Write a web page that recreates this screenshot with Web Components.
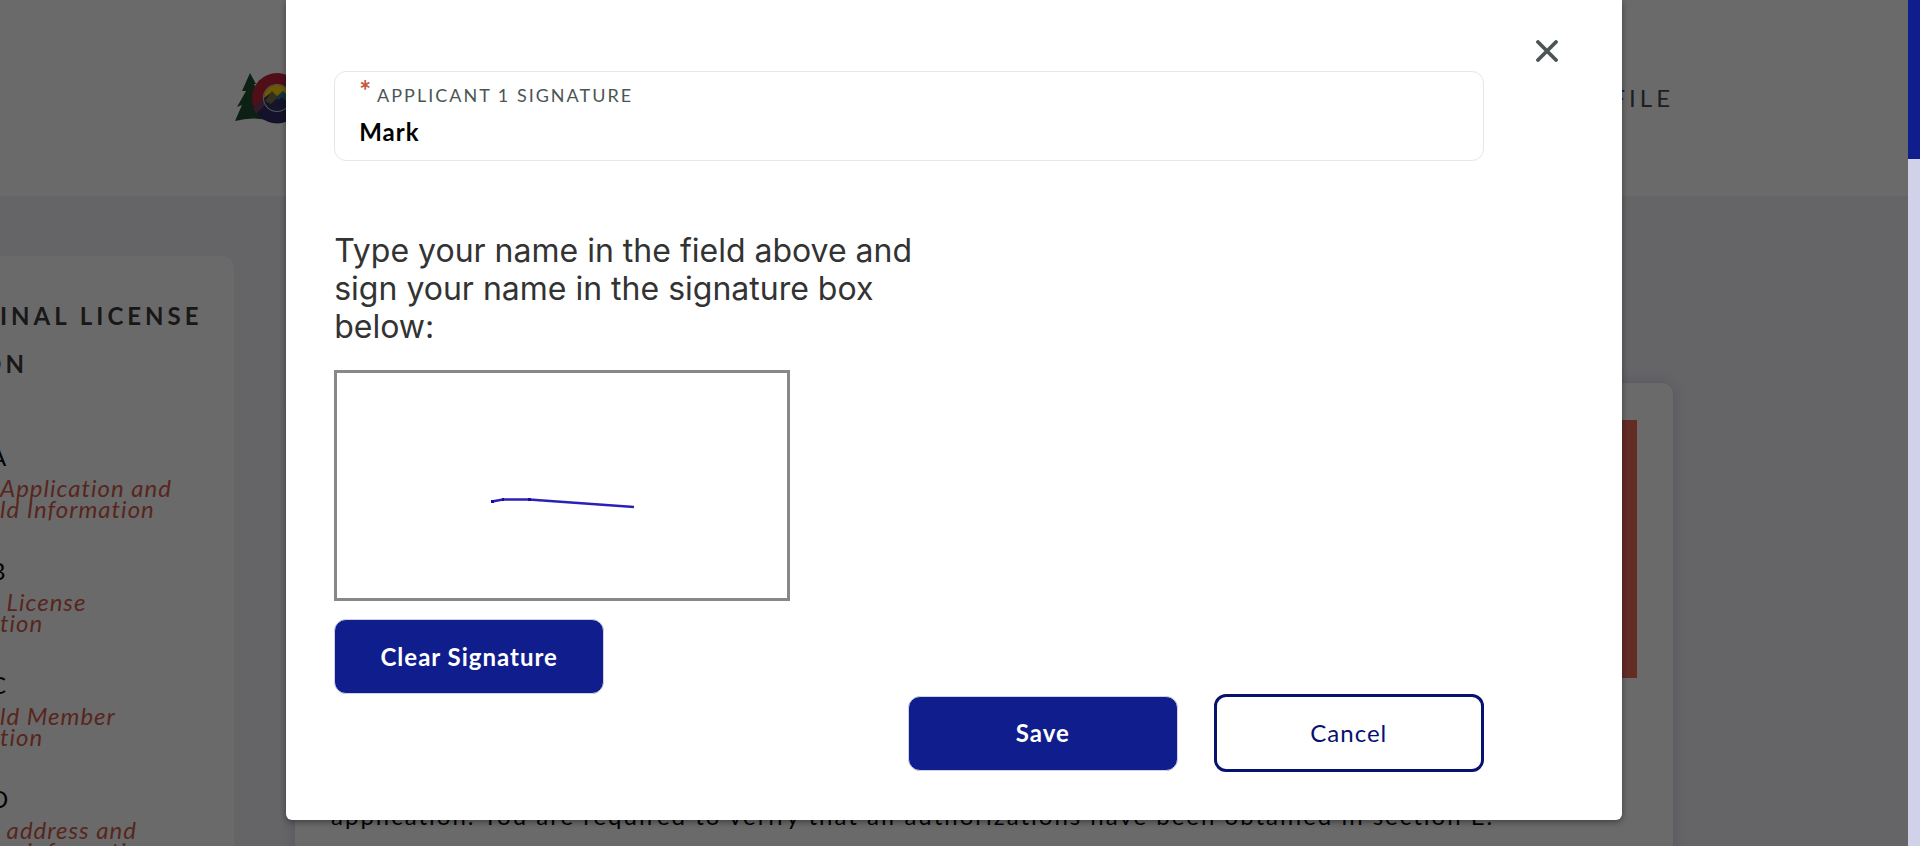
<!DOCTYPE html>
<html lang="en">
<head>
<meta charset="utf-8">
<title>Applicant signature</title>
<style>
  html, body { margin: 0; height: 100%; }
  body { font-family: Lato, "Open Sans", sans-serif; font-size: 24px; color: #000; overflow: hidden; }
</style>
</head>
<body>
<license-app></license-app>

<script>
const define = (name, html, setup) => {
  const template = document.createElement('template');
  template.innerHTML = html;
  customElements.define(name, class extends HTMLElement {
    constructor() {
      super();
      this.attachShadow({ mode: 'open' }).append(template.content.cloneNode(true));
    }
    connectedCallback() { if (setup) setup(this, this.shadowRoot); }
  });
};

define('site-header', `
  <style>
    :host { display: flex; align-items: center; justify-content: space-between; box-sizing: border-box;
      height: 196px; padding: 0 234px; background: #fff; }
    svg { display: block; width: 70px; height: 54px; }
    a { color: #3c4548; text-decoration: none; letter-spacing: 4px; line-height: 32px; }
  </style>
  <svg viewBox="0 0 70 54" role="img" aria-label="Colorado">
    <path d="M16 2 22 13 20 13 26 24 23 24 30 36 27 36 36 50Q20 45 1 50L8 34 3 36 12 20 8 20Z" fill="#124a28"/>
    <circle cx="43" cy="27" r="25" fill="#b81a34"/>
    <path d="M19 37 32 26 42 34 68 28A25 25 0 0 1 22 41Z" fill="#24235f"/>
    <path d="M19 37 31 27 34 31 22 43Z" fill="#6d3a5d"/>
    <circle cx="43" cy="27" r="14" fill="#c8c8d0"/>
    <circle cx="43" cy="27" r="13" fill="#262963"/>
    <path d="M30 27A13 13 0 0 1 56 27L49 21 43 26 38 21Z" fill="#ffd400"/>
    <path d="M31 30 38 20 44 26 37 33Z" fill="#78733d"/>
    <path d="M42 26 49 20 56 27 53 31 48 26 44 29Z" fill="#2a7093"/>
  </svg>
  <nav><a href="#profile">PROFILE</a></nav>`);

define('step-item', `
  <style>
    :host { display: block; height: 114px; }
    .letter { display: block; margin-left: -10px; line-height: 32px; }
    .about { display: block; white-space: pre; font-style: italic; line-height: 21px; color: #cd5544; letter-spacing: 1px; padding-top: 4px; }
  </style>
  <span class="letter"><slot name="letter"></slot></span>
  <span class="about"><slot></slot></span>`);

define('step-list', `
  <style>
    :host { display: block; overflow: hidden; background: #fff; border-radius: 0 12px 0 0; padding-top: 36px; }
    h2 { margin: 0 0 53px; font-size: 24px; font-weight: 700; line-height: 48px; letter-spacing: 4px; color: #333; white-space: nowrap; }
    .wrapped { display: block; margin-left: -18px; }
  </style>
  <h2>INAL LICENSE<span class="wrapped">ON</span></h2>
  <step-item><span slot="letter">A</span>Application and
ld Information</step-item>
  <step-item><span slot="letter">B</span> License
tion</step-item>
  <step-item><span slot="letter">C</span>ld Member
tion</step-item>
  <step-item><span slot="letter">D</span> address and
    information</step-item>`);

define('content-card', `
  <style>
    :host { display: block; box-sizing: border-box; background: #fff; border: 1px solid #dcdce4; border-radius: 12px;
      padding: 37px 36px; box-shadow: 0 0 18px #d0d1eb; }
    .alert { height: 258px; background: #eb6655; }
    p { margin: 122px 0 0; line-height: 32px; letter-spacing: 2px; white-space: nowrap; }
  </style>
  <div class="alert"></div>
  <p>application. You are required to verify that all authorizations have been obtained in section E.</p>`);

define('page-scrollbar', `
  <style>
    :host { display: block; background: #d1d2ea; }
    div { height: 159px; background: #101d8c; }
  </style>
  <div></div>`);

define('form-field', `
  <style>
    :host { display: block; box-sizing: border-box; height: 90px; border: 1px solid #e6e6e6; border-radius: 12px; padding: 4px 24px; }
    label { display: flex; gap: 6px; color: #4b5555; font-size: 18px; line-height: 38px; letter-spacing: 2px; }
    abbr { color: #c9553f; font-size: 28px; font-weight: 700; line-height: 28px; letter-spacing: 0; text-decoration: none; }
    input { display: block; box-sizing: border-box; width: 100%; height: 36px; padding: 0; border: 0; outline: 0;
      background: none; font: 700 24px/36px Lato, "Open Sans", sans-serif; letter-spacing: 1px; color: #000; }
  </style>
  <label for="name"><abbr title="required">*</abbr><span><slot></slot></span></label>
  <input id="name" type="text">`,
  (host, root) => { root.querySelector('input').value = host.getAttribute('value'); });

define('action-button', `
  <style>
    :host { display: block; width: 270px; }
    button { display: block; box-sizing: border-box; width: 100%; height: 75px; padding: 0; border: 1px solid #d0d1e4;
      border-radius: 12px; background: #101d8c; color: #fff; font: 700 24px/32px Lato, "Open Sans", sans-serif; letter-spacing: 1px; }
    :host([outlined]) button { height: 78px; border: 3px solid #07126e; background: #fff; color: #07126e; font-weight: 400; }
  </style>
  <button type="button"><slot></slot></button>`);

define('signature-pad', `
  <style>
    :host { display: block; box-sizing: border-box; width: 456px; height: 231px; border: 3px solid #888; }
    svg { display: block; }
  </style>
  <svg width="450" height="225" viewBox="0 0 450 225" role="img" aria-label="Signature">
    <path d="M155 128.5 166 126.5 192 126.5 297 134" fill="none" stroke="#2a22b4" stroke-width="2.6"/>
    <path d="M154 127h3v3h-3zM165 125h2v3h-2zM191 125h3v3h-3z" fill="#150da0"/>
  </svg>`);

define('signature-dialog', `
  <style>
    :host { display: grid; grid-template-columns: 1fr 54px; gap: 36px; align-items: start; box-sizing: border-box; width: 70%;
      background: #fff; border-radius: 0 0 6px 6px; padding: 24px 48px 48px; box-shadow: 0 2px 6px rgba(0,0,0,.4); }
    form { display: block; padding-top: 47px; }
    h1 { margin: 71px 0 24px; max-width: 600px; font: 400 32px/38px Inter, "Open Sans", sans-serif; color: #333; }
    signature-pad { margin-bottom: 18px; }
    .actions { display: flex; justify-content: flex-end; align-items: center; gap: 36px; }
    .close { display: grid; place-items: center; width: 54px; height: 54px; padding: 0; border: 0; background: none; }
  </style>
  <form>
    <form-field value="Mark">APPLICANT 1 SIGNATURE</form-field>
    <h1>Type your name in the field above and<br>sign your name in the signature box<br>below:</h1>
    <signature-pad></signature-pad>
    <action-button>Clear Signature</action-button>
    <div class="actions">
      <action-button>Save</action-button>
      <action-button outlined>Cancel</action-button>
    </div>
  </form>
  <button class="close" type="button" aria-label="Close">
    <svg width="22" height="22" viewBox="0 0 22 22"><path d="M2 2 20 20M20 2 2 20" stroke="#4b5555" stroke-width="3.8" stroke-linecap="round"/></svg>
  </button>`);

define('license-app', `
  <style>
    :host { display: grid; grid-template-columns: 1fr 12px; height: 100vh; overflow: hidden; }
    .view { display: grid; grid-template: 100vh / 100%; overflow: hidden; }
    .page, .backdrop { grid-area: 1 / 1; min-width: 0; }
    .page { background: #f1f1f5; overflow: hidden; }
    main { display: grid; grid-template-columns: 234px 1fr; column-gap: 60px; align-items: start; padding: 60px 234px 0 0; }
    content-card { margin-top: 126px; min-width: 0; }
    .backdrop { z-index: 1; display: flex; justify-content: center; align-items: flex-start; background: rgba(8,7,7,.6); }
  </style>
  <div class="view">
    <div class="page">
      <site-header></site-header>
      <main>
        <step-list></step-list>
        <content-card></content-card>
      </main>
    </div>
    <div class="backdrop"><signature-dialog role="dialog" aria-modal="true"></signature-dialog></div>
  </div>
  <page-scrollbar></page-scrollbar>`);
</script>
</body>
</html>
